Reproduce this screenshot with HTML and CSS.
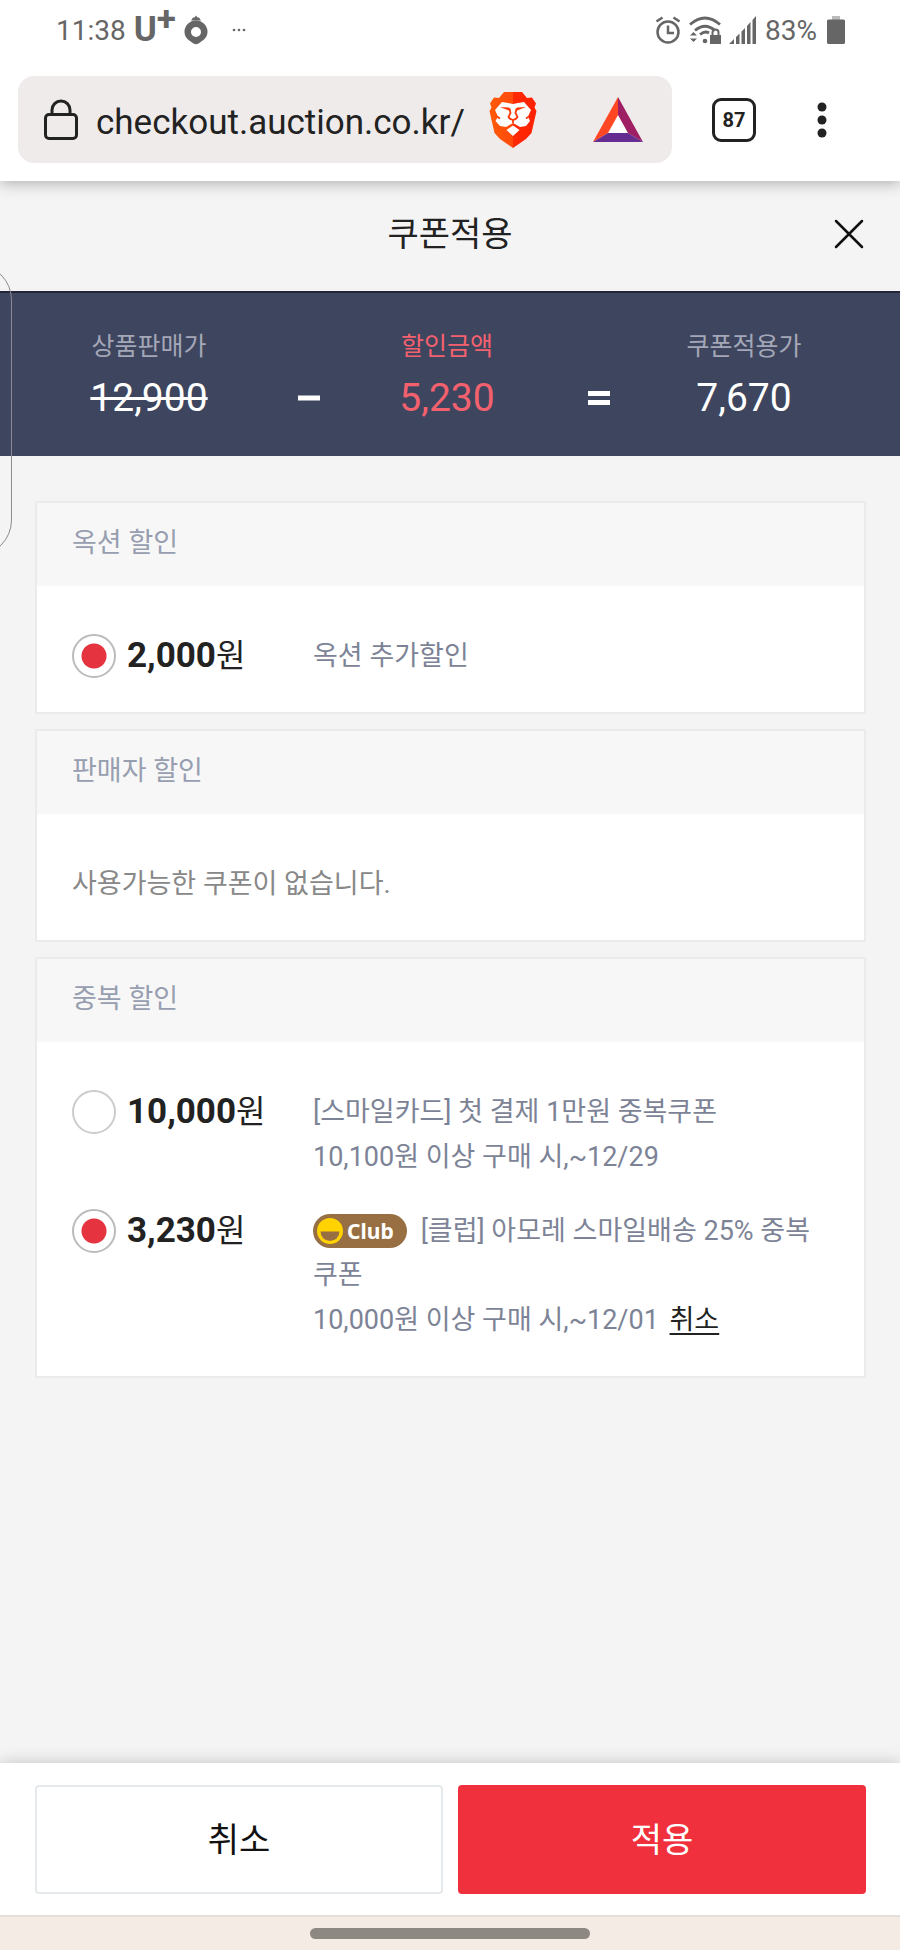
FILE: index.html
```html
<!DOCTYPE html>
<html lang="ko">
<head>
    <meta charset="UTF-8">
    <meta name="viewport" content="width=device-width, initial-scale=1.0">
    <title>쿠폰적용</title>
    <link rel="stylesheet" href="styles.css">
</head>
<body>
    <!-- Phone status bar -->
    <div class="status-bar">
        <div class="status-left">
            <span>11:38</span>
            <span class="carrier">U<span class="carrier-plus">+</span></span>
            <svg class="pin-icon" width="24" height="30" viewBox="0 0 24 30">
                <path d="M7 5.500l2-3h1.500l1.500-2 1.500 2H15l2 3z" fill="#666"/>
                <path fill-rule="evenodd" d="M12 5.500a11.500 11.500 0 0 1 11.500 11.500c0 6-5 8.500-9 11.500q-2.500 1.500-5 0c-4-3-9-5.500-9-11.500A11.500 11.500 0 0 1 12 5.500zm0 6.500a5 5 0 1 0 0 10 5 5 0 0 0 0-10z" fill="#666"/>
            </svg>
            <svg class="more-icon" width="14" height="4" viewBox="0 0 14 4" fill="#666">
                <circle cx="2" cy="2" r="1.300"/><circle cx="7" cy="2" r="1.300"/><circle cx="12" cy="2" r="1.300"/>
            </svg>
        </div>
        <div class="status-right">
            <svg width="26" height="28" viewBox="0 0 26 28" fill="none" stroke="#666" stroke-width="2.500">
                <circle cx="13" cy="16" r="10.500"/>
                <path d="M13 9.500V17h6M1.500 5.500l6-4M24.500 5.500l-6-4"/>
            </svg>
            <svg width="32" height="28" viewBox="0 0 32 28" fill="none" stroke="#666" stroke-width="2.800">
                <path d="M1 8.500Q16-4.500 31 8.500M6 14.500q10-8.500 20 0M11 18.500q5-4 9-1.500"/>
                <circle cx="16" cy="25" r="2.300" fill="#666" stroke="none"/>
                <path d="M1 19.500l3.500-3.500 3.500 3.500zM1 22.500h7L4.500 26zM21 19h11v9H21z" fill="#666" stroke="none"/>
                <path d="M23.500 20v-3.500q0-3 3-3t3 3V20" stroke-width="2"/>
            </svg>
            <svg width="28" height="28" viewBox="0 0 28 28" fill="#666">
                <path d="M0 28l5-5v5zM7 21l3.500-3.500V28H7zM12.500 15.500L16 12v16h-3.500zM18 10l3.500-4v22H18zM23.500 4L27 0v28h-3.500z"/>
            </svg>
            <span>83%</span>
            <svg class="battery-icon" width="18" height="28" viewBox="0 0 18 28">
                <path d="M5 0h8v4H5z" fill="#bbb"/>
                <rect y="3.500" width="18" height="24.500" rx="1.500" fill="#666"/>
            </svg>
        </div>
    </div>

    <!-- Browser toolbar -->
    <div class="toolbar">
        <div class="address-bar">
            <svg class="lock-icon" width="34" height="42" viewBox="0 0 34 42" fill="none" stroke="#222" stroke-width="3">
                <rect x="1.500" y="15.500" width="31" height="24" rx="3.500"/>
                <path d="M8 15V11a9 9 0 0 1 18 0v4"/>
            </svg>
            <input class="url" type="text" aria-label="주소" value="checkout.auction.co.kr/">
            <svg class="lion-icon" width="48" height="56" viewBox="0 0 48 56">
                <defs>
                    <linearGradient id="lion">
                        <stop offset="0" stop-color="#ff5a08"/>
                        <stop offset=".5" stop-color="#ff4a0c"/>
                        <stop offset=".5" stop-color="#ff2a06"/>
                        <stop offset="1" stop-color="#ff2000"/>
                    </linearGradient>
                </defs>
                <path d="M15 0h18l5 6 5-.500 4 6-1.500 4L47.500 19l-5 22-5.500 6-13 9-13-9-5.500-6L.5 19l2-3.500L1 11.500l4-6 5 .500z" fill="url(#lion)"/>
                <path d="M13 10l6 1 5 1 5-1 6-1 7 8-3 6.500 2 4.500-4 5-6 1-7-4-7 4-6-1-4.500-5L9 24.500 6 18z" fill="#fff"/>
                <path d="M11 15l9 .500 1.500 1.500-.5 2-5-2zM37 15l-9 .500-1.500 1.500.5 2 5-2z" fill="#ff3a08"/>
                <path d="M20.500 17l1 4-2 4q1 2 4.500 3 3.500-1 4.500-3l-2-4 1-4" fill="none" stroke="#ff3a08" stroke-width="1.800"/>
                <path d="M24 28v3M8 24.500l3 2M40 24.500l-3 2" stroke="#ff3a08" stroke-width="1.800"/>
                <path d="M24 33.500l6.500 4.500-6.500 6-6.500-6z" fill="#fff"/>
            </svg>
            <svg class="bat-icon" width="50" height="45" viewBox="0 0 50 45">
                <path d="M25 18L35 36H15z" fill="#fff"/>
                <path d="M25 0v18L15 36 0 45z" fill="#ff4724"/>
                <path d="M25 0v18l10 18 15 9z" fill="#9e1f63"/>
                <path d="M0 45l15-9h20l15 9z" fill="#662d91"/>
            </svg>
        </div>
        <button class="tabs-btn" type="button">87</button>
        <button class="menu-btn" type="button" aria-label="메뉴">
            <svg width="10" height="36" viewBox="0 0 10 36" fill="#222">
                <circle cx="5" cy="5" r="4.500"/><circle cx="5" cy="18" r="4.500"/><circle cx="5" cy="31" r="4.500"/>
            </svg>
        </button>
    </div>

    <header class="page-header">
        <h1>쿠폰적용</h1>
        <button class="close-btn" type="button" aria-label="닫기">
            <svg width="30" height="30" viewBox="0 0 30 30" stroke="#111" stroke-width="2.500" stroke-linecap="round">
                <path d="M2 2l26 26M28 2L2 28"/>
            </svg>
        </button>
    </header>

    <section class="summary">
        <div class="price">
            <span class="price-label">상품판매가</span>
            <del class="price-value">12,900</del>
        </div>
        <svg class="operator" width="22" height="14" viewBox="0 0 22 14" fill="#fff">
            <path d="M0 4.500h22v5H0z"/>
        </svg>
        <div class="price discount">
            <span class="price-label">할인금액</span>
            <span class="price-value">5,230</span>
        </div>
        <svg class="operator" width="22" height="14" viewBox="0 0 22 14" fill="#fff">
            <path d="M0 0h22v5H0zM0 9h22v5H0z"/>
        </svg>
        <div class="price">
            <span class="price-label">쿠폰적용가</span>
            <span class="price-value">7,670</span>
        </div>
    </section>

    <main class="coupons">
        <section class="card">
            <h2>옥션 할인</h2>
            <div class="card-body">
                <div class="coupon">
                    <input type="radio" id="auction-1" name="auction" checked>
                    <label class="amount" for="auction-1"><b>2,000</b>원</label>
                    <div class="desc">
                        <p>옥션 추가할인</p>
                    </div>
                </div>
            </div>
        </section>

        <section class="card">
            <h2>판매자 할인</h2>
            <div class="card-body">
                <p class="empty">사용가능한 쿠폰이 없습니다.</p>
            </div>
        </section>

        <section class="card">
            <h2>중복 할인</h2>
            <div class="card-body">
                <div class="coupon">
                    <input type="radio" id="extra-1" name="extra">
                    <label class="amount" for="extra-1"><b>10,000</b>원</label>
                    <div class="desc">
                        <p>[스마일카드] 첫 결제 1만원 중복쿠폰</p>
                        <p>10,100원 이상 구매 시,~12/29</p>
                    </div>
                </div>
                <div class="coupon">
                    <input type="radio" id="extra-2" name="extra" checked>
                    <label class="amount" for="extra-2"><b>3,230</b>원</label>
                    <div class="desc">
                        <p><span class="club"><svg width="26" height="26" viewBox="0 0 26 26"><circle cx="13" cy="13" r="13" fill="#ffd200"/><path d="M3.500 13.500h19a9.500 9.500 0 0 1-19 0z" fill="#986f43"/></svg>Club</span>[클럽] 아모레 스마일배송 25% 중복쿠폰</p>
                        <p>10,000원 이상 구매 시,~12/01 <a class="cancel-link" href="#">취소</a></p>
                    </div>
                </div>
            </div>
        </section>
    </main>

    <footer class="actions">
        <button class="btn" type="button">취소</button>
        <button class="btn btn-apply" type="button">적용</button>
    </footer>

    <div class="nav-bar"><span class="nav-handle"></span></div>

    <div class="edge-panel"></div>
</body>
</html>
```
FILE: styles.css
```css
* {
    box-sizing: border-box;
}
body {
    display: flex;
    flex-direction: column;
    position: relative;
    min-height: 100vh;
    margin: 0;
    overflow-x: hidden;
    background-color: #f4f4f4;
    color: #222;
    font-family: Roboto, "Noto Sans CJK KR", sans-serif;
    font-size: 27px;
}
h1, h2, p {
    margin: 0;
    font-weight: 400;
}
button {
    flex-shrink: 0;
    padding: 0;
    border: none;
    background: none;
    color: #222;
    font-family: inherit;
    cursor: pointer;
}
svg {
    display: block;
    flex-shrink: 0;
}

/* status bar */
.status-bar {
    display: flex;
    justify-content: space-between;
    align-items: center;
    position: relative;
    z-index: 1;
    height: 60px;
    padding: 0 55px 0 56px;
    background-color: #fff;
    color: #666;
    font-size: 28px;
}
.status-left, .status-right {
    display: flex;
    align-items: center;
    gap: 8px;
}
.carrier {
    display: flex;
    font-size: 35px;
    font-weight: 700;
    line-height: 40px;
}
.carrier-plus {
    line-height: 20px;
}
.more-icon {
    margin-left: 16px;
}
.battery-icon {
    margin-left: 2px;
}

/* browser toolbar */
.toolbar {
    display: flex;
    align-items: center;
    padding: 16px 73px 18px 18px;
    background-color: #fff;
    box-shadow: 0 2px 14px rgba(0, 0, 0, 0.3);
}
.address-bar {
    display: flex;
    flex: 1;
    align-items: center;
    min-width: 0;
    height: 87px;
    padding: 0 29px 0 26px;
    border-radius: 16px;
    background-color: #efebea;
}
.url {
    flex: 1;
    min-width: 0;
    margin-left: 18px;
    padding: 5px 0 0;
    border: none;
    background: none;
    color: #222;
    font-family: inherit;
    font-size: 35px;
}
.bat-icon {
    margin-left: 56px;
}
.tabs-btn {
    width: 44px;
    height: 44px;
    margin: 0 61px 0 40px;
    border: 3px solid #222;
    border-radius: 9px;
    font-size: 20px;
    font-weight: 700;
}

/* page header */
.page-header {
    display: grid;
    grid-template-columns: 1fr auto 1fr;
    align-items: center;
    height: 110px;
    padding: 0 36px 4px;
}
.page-header h1 {
    grid-column: 2;
    padding-bottom: 6px;
    font-size: 34px;
}
.close-btn {
    justify-self: end;
}

/* price summary */
.summary {
    display: grid;
    grid-template-columns: 260fr 59fr 218fr 86fr 204fr;
    justify-items: center;
    align-items: end;
    height: 165px;
    padding: 0 54px 33px 19px;
    border-top: 2px solid #24243a;
    background-color: #3e455e;
    color: #fff;
}
.price {
    display: flex;
    flex-direction: column;
    align-items: center;
}
.price-label {
    color: #a3a7b7;
    font-size: 25px;
    line-height: 52px;
}
.price-value {
    font-size: 39px;
    line-height: 50px;
}
.discount, .discount .price-label {
    color: #f4616e;
}
.operator {
    margin-bottom: 18px;
}

/* coupon cards */
.coupons {
    display: flex;
    flex: 1;
    flex-direction: column;
    gap: 15px;
    padding: 45px 34px 45px 35px;
}
.card {
    border: 2px solid #ebebeb;
    background-color: #fff;
}
.card h2 {
    padding: 18px 35px 21px;
    background-color: #f7f7f7;
    color: #979eb0;
    font-size: 27px;
    line-height: 44px;
}
.card-body {
    display: flex;
    flex-direction: column;
    gap: 30px;
    padding: 48px 35px 34px;
}
.coupon {
    display: flex;
    align-items: flex-start;
}
.coupon input {
    appearance: none;
    width: 44px;
    height: 44px;
    margin: 0;
    border: 2px solid #ccc;
    border-radius: 50%;
    background-color: #fff;
}
.coupon input:checked {
    border-color: #bbb;
    background-image: radial-gradient(circle, #e5333f 12px, transparent 13px);
}
.amount {
    width: 186px;
    margin-left: 11px;
    font-size: 32px;
    line-height: 44px;
}
.amount b {
    font-size: 35px;
    font-weight: 700;
}
.desc {
    flex: 1;
    color: #7d8396;
    line-height: 44px;
}
.desc p + p {
    padding-top: 1px;
}
.empty {
    color: #888;
    line-height: 44px;
}
.club {
    display: inline-flex;
    align-items: center;
    gap: 4px;
    height: 34px;
    margin: 0 14px 4px 0;
    padding: 0 13px 0 4px;
    border-radius: 17px;
    background-color: #986f43;
    color: #fff;
    font-family: "Noto Sans", sans-serif;
    font-size: 21px;
    font-weight: 700;
    line-height: 34px;
    vertical-align: middle;
}
.cancel-link {
    margin-left: 4px;
    color: #222;
    text-decoration-thickness: 2px;
    text-underline-offset: 4px;
}

/* bottom buttons */
.actions {
    display: flex;
    gap: 15px;
    padding: 22px 34px 21px 35px;
    background-color: #fff;
    box-shadow: 0 0 16px rgba(0, 0, 0, 0.2);
}
.btn {
    flex: 1;
    height: 109px;
    padding-bottom: 4px;
    border: 2px solid #e6e9ec;
    border-radius: 4px;
    background-color: #fff;
    color: #111;
    font-size: 34px;
}
.btn-apply {
    border-color: #f0303c;
    background-color: #f0303c;
    color: #fff;
}

/* gesture bar */
.nav-bar {
    display: flex;
    justify-content: center;
    align-items: center;
    position: relative;
    height: 35px;
    border-top: 2px solid #e5dfda;
    background-color: #f4ebe4;
}
.nav-handle {
    width: 280px;
    height: 11px;
    border-radius: 6px;
    background-color: #8d8982;
}

/* edge panel that peeks in from the left side */
.edge-panel {
    position: absolute;
    top: 264px;
    left: -70px;
    width: 82px;
    height: 292px;
    border: 1px solid #8b8b90;
    border-radius: 36px;
    pointer-events: none;
}
```
